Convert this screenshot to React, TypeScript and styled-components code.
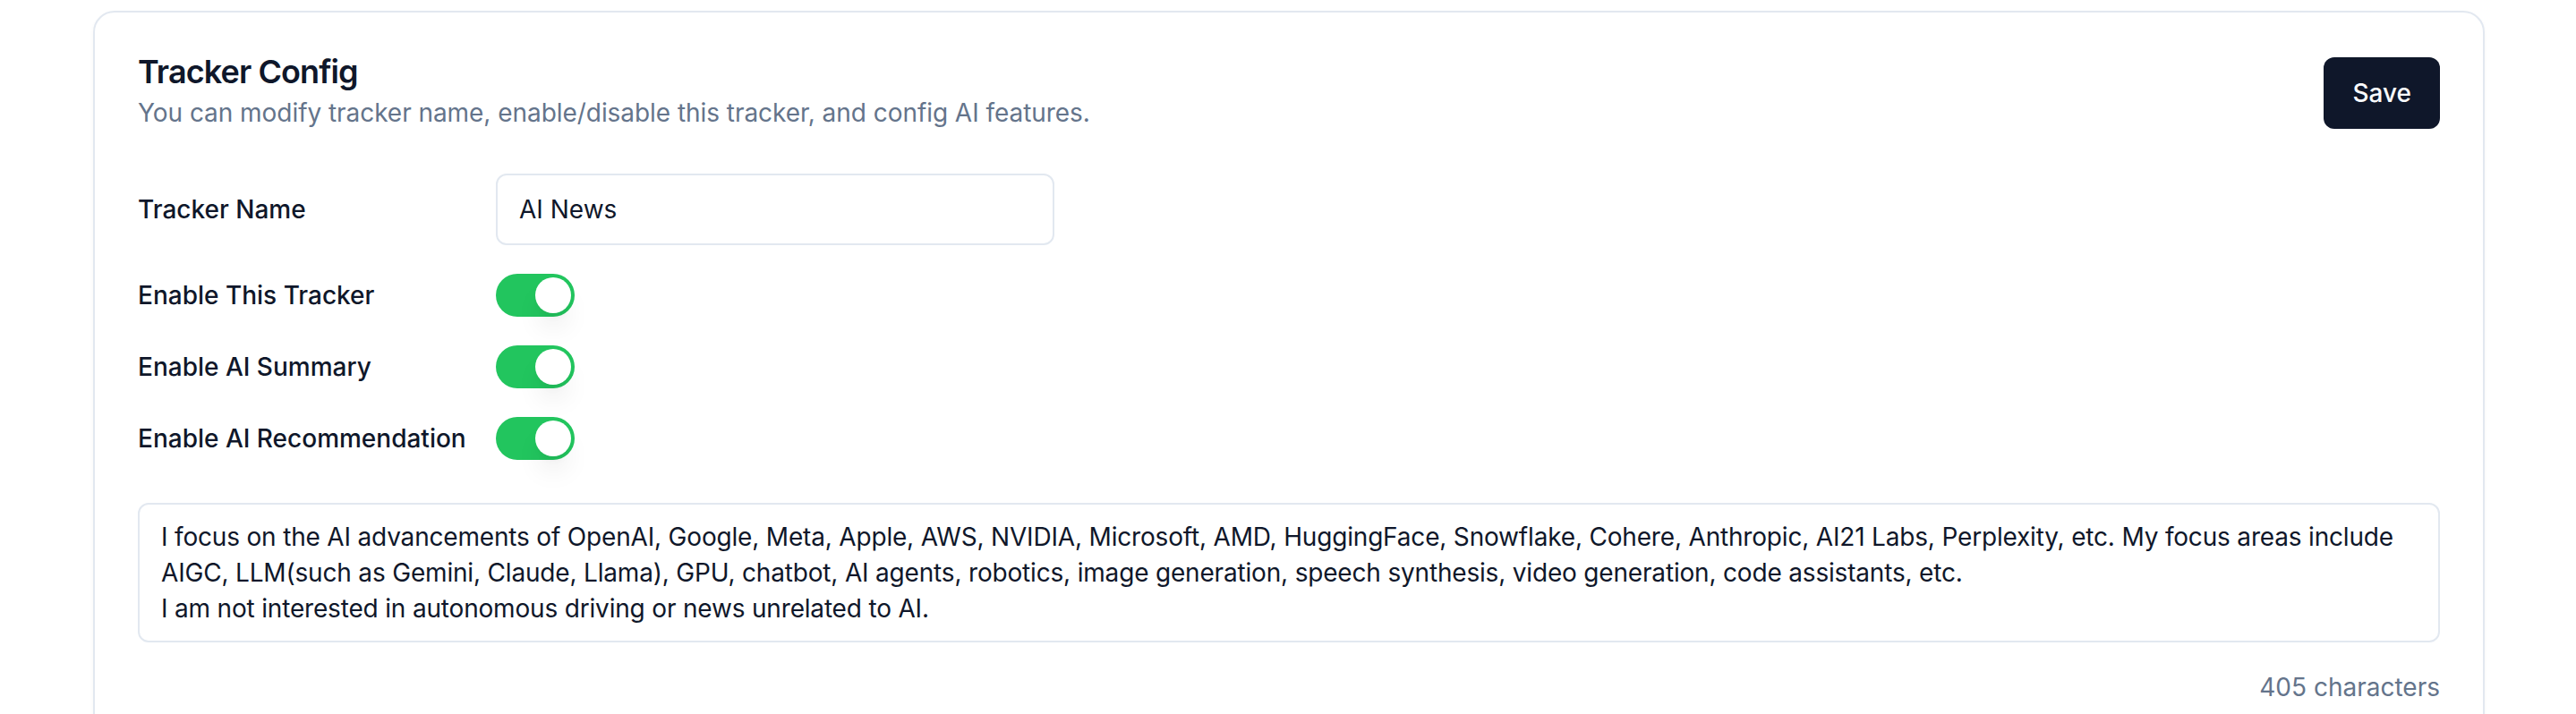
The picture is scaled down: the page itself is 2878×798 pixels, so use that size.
import React, { useState } from "react";
import styled, { createGlobalStyle } from "styled-components";

const GlobalStyle = createGlobalStyle`
  * { box-sizing: border-box; }
  html, body { margin: 0; padding: 0; background: #ffffff; }
  body {
    font-family: Inter, "Noto Sans", "Liberation Sans", sans-serif;
    color: #0f172a;
    -webkit-font-smoothing: antialiased;
  }
`;

const Page = styled.div`
  padding: 12px 102px 0 104px;
`;

const Card = styled.section`
  border: 2px solid #e2e8f0;
  border-radius: 24px;
  background: #ffffff;
  box-shadow: 0 2px 4px rgba(15, 23, 42, 0.04);
  padding: 48px;
`;

const Header = styled.header`
  display: flex;
  justify-content: space-between;
  align-items: flex-start;
  padding-bottom: 48px;
`;

const HeadText = styled.div`
  display: flex;
  flex-direction: column;
  gap: 8px;
`;

const Title = styled.h2`
  margin: 0;
  font-size: 36px;
  line-height: 36px;
  font-weight: 600;
  letter-spacing: -0.9px;
  color: #0f172a;
`;

const Subtitle = styled.p`
  margin: 0;
  font-size: 28px;
  line-height: 40px;
  letter-spacing: -0.05px;
  color: #64748b;
`;

const SaveButton = styled.button`
  margin-top: 2px;
  height: 80px;
  padding: 0 32px;
  border: none;
  border-radius: 12px;
  background: #0f172a;
  color: #f8fafc;
  font-family: inherit;
  font-size: 28px;
  font-weight: 500;
  cursor: pointer;
`;

const Form = styled.div`
  display: flex;
  flex-direction: column;
  gap: 32px;
`;

const Row = styled.div`
  display: grid;
  grid-template-columns: 400px auto;
  align-items: center;
  justify-content: start;
`;

const Label = styled.label`
  font-size: 28px;
  line-height: 40px;
  font-weight: 500;
  color: #0f172a;
`;

const TextInput = styled.input`
  width: 624px;
  height: 80px;
  padding: 0 24px;
  border: 2px solid #e2e8f0;
  border-radius: 12px;
  font-family: inherit;
  font-size: 28px;
  color: #0f172a;
  background: #ffffff;
  outline: none;
`;

const SwitchTrack = styled.button<{ $on: boolean }>`
  width: 88px;
  height: 48px;
  padding: 0;
  border: 4px solid transparent;
  border-radius: 999px;
  background: ${(p) => (p.$on ? "#22c55e" : "#e2e8f0")};
  display: flex;
  align-items: center;
  cursor: pointer;
`;

const SwitchThumb = styled.span<{ $on: boolean }>`
  width: 40px;
  height: 40px;
  border-radius: 50%;
  background: #ffffff;
  box-shadow: 0 20px 30px -6px rgba(0, 0, 0, 0.1), 0 8px 12px -8px rgba(0, 0, 0, 0.1);
  transform: translateX(${(p) => (p.$on ? "40px" : "0")});
`;

const Prompt = styled.textarea`
  margin-top: 16px;
  width: 100%;
  height: 156px;
  padding: 16px 24px;
  border: 2px solid #e2e8f0;
  border-radius: 12px;
  font-family: inherit;
  font-size: 28px;
  line-height: 40px;
  letter-spacing: -0.18px;
  color: #0f172a;
  resize: none;
  outline: none;
  overflow: hidden;
`;

const Count = styled.div`
  margin-top: -2px;
  text-align: right;
  font-size: 28px;
  line-height: 40px;
  color: #64748b;
`;

const promptText =
  "I focus on the AI advancements of OpenAI, Google, Meta, Apple, AWS, NVIDIA, Microsoft, AMD, HuggingFace, Snowflake, Cohere, Anthropic, AI21 Labs, Perplexity, etc. My focus areas include AIGC, LLM(such as Gemini, Claude, Llama), GPU, chatbot, AI agents, robotics, image generation, speech synthesis, video generation, code assistants, etc.\nI am not interested in autonomous driving or news unrelated to AI.";

function Toggle({ on, onChange }: { on: boolean; onChange: () => void }) {
  return (
    <SwitchTrack $on={on} onClick={onChange} role="switch" aria-checked={on}>
      <SwitchThumb $on={on} />
    </SwitchTrack>
  );
}

export default function App() {
  const [name, setName] = useState("AI News");
  const [enabled, setEnabled] = useState(true);
  const [summary, setSummary] = useState(true);
  const [rec, setRec] = useState(true);
  const [prompt, setPrompt] = useState(promptText);

  return (
    <Page>
      <GlobalStyle />
      <Card>
        <Header>
          <HeadText>
            <Title>Tracker Config</Title>
            <Subtitle>
              You can modify tracker name, enable/disable this tracker, and config AI features.
            </Subtitle>
          </HeadText>
          <SaveButton>Save</SaveButton>
        </Header>
        <Form>
          <Row>
            <Label>Tracker Name</Label>
            <TextInput value={name} onChange={(e) => setName(e.target.value)} />
          </Row>
          <Row>
            <Label>Enable This Tracker</Label>
            <Toggle on={enabled} onChange={() => setEnabled(!enabled)} />
          </Row>
          <Row>
            <Label>Enable AI Summary</Label>
            <Toggle on={summary} onChange={() => setSummary(!summary)} />
          </Row>
          <Row>
            <Label>Enable AI Recommendation</Label>
            <Toggle on={rec} onChange={() => setRec(!rec)} />
          </Row>
          <Prompt value={prompt} onChange={(e) => setPrompt(e.target.value)} />
          <Count>{prompt.length} characters</Count>
        </Form>
      </Card>
    </Page>
  );
}
